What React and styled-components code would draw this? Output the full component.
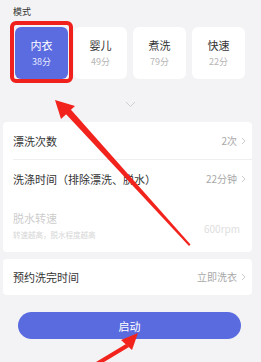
import styled, { createGlobalStyle } from "styled-components";

const GlobalStyle = createGlobalStyle`
  * { box-sizing: border-box; }
  body {
    margin: 0;
    background: #f3f3f5;
    font-family: "Noto Sans CJK SC", "Noto Sans", sans-serif;
  }
`;

const Page = styled.div`
  position: relative;
  width: 261px;
  height: 362px;
  overflow: hidden;
  background: #f3f3f5;
  display: flex;
  flex-direction: column;
`;

const SectionLabel = styled.div`
  padding: 4px 0 0 13px;
  height: 27px;
  font-size: 9px;
  line-height: 16px;
  color: #333;
`;

const ModeRow = styled.div`
  display: flex;
  gap: 6px;
  padding: 0 14px 0 15px;
`;

const ModeCard = styled.div`
  position: relative;
  width: 53px;
  height: 52px;
  border-radius: 6px;
  background: ${(p) => (p.$active ? "#5a6ce0" : "#ffffff")};
  display: flex;
  flex-direction: column;
  align-items: center;
  justify-content: center;
  gap: 2px;

  ${(p) =>
    p.$active &&
    `
    &::after {
      content: "";
      position: absolute;
      inset: -6px -5px -4px -5px;
      border: 4px solid #f0201c;
      border-radius: 6px;
    }
  `}
`;

const ModeName = styled.span`
  font-size: 11px;
  line-height: 15px;
  color: ${(p) => (p.$active ? "#ffffff" : "#333333")};
`;

const ModeTime = styled.span`
  font-size: 9px;
  line-height: 13px;
  color: ${(p) => (p.$active ? "#e6e9ff" : "#b5b5b5")};
`;

const ExpandToggle = styled.div`
  height: 43px;
  display: flex;
  align-items: center;
  justify-content: center;
  padding-top: 8px;
`;

const Panel = styled.div`
  margin: 0 9px 0 3px;
  background: #ffffff;
  border-radius: 4px;
  display: flex;
  flex-direction: column;
`;

const Row = styled.div`
  position: relative;
  display: flex;
  align-items: center;
  justify-content: space-between;
  height: ${(p) => p.$height || 38}px;
  padding: 0 6px 0 10px;

  ${(p) =>
    p.$divider &&
    `
    &::after {
      content: "";
      position: absolute;
      left: 10px;
      right: 0;
      bottom: 0;
      height: 1px;
      background: #efeff1;
    }
  `}
`;

const LabelGroup = styled.div`
  display: flex;
  flex-direction: column;
  gap: 5px;
`;

const RowLabel = styled.span`
  font-size: 11px;
  line-height: 14px;
  color: ${(p) => (p.$disabled ? "#cdcdcd" : "#333333")};
`;

const RowHint = styled.span`
  font-size: 7.5px;
  line-height: 10px;
  color: #d6d6d6;
`;

const RowValue = styled.span`
  display: flex;
  align-items: center;
  gap: 4px;
  font-size: 10px;
  line-height: 14px;
  color: ${(p) => (p.$disabled ? "#dedede" : "#a8a8a8")};
  padding-right: ${(p) => (p.$disabled ? "6px" : "0")};
  margin-top: ${(p) => (p.$disabled ? "8px" : "0")};
`;

const Gap = styled.div`
  height: ${(p) => p.$size}px;
`;

const StartButton = styled.button`
  margin: 0 20px 0 18px;
  height: 27px;
  border: none;
  border-radius: 14px;
  background: #5a6be0;
  color: #ffffff;
  font-family: inherit;
  font-size: 11px;
  padding: 0;
`;

const ArrowLayer = styled.svg`
  position: absolute;
  left: 0;
  top: 0;
  pointer-events: none;
`;

const Chevron = () => (
  <svg width="5" height="8" viewBox="0 0 5 8">
    <path d="M1 1l3 3-3 3" fill="none" stroke="#cfcfcf" strokeWidth="1" />
  </svg>
);

const modes = [
  { name: "内衣", time: "38分", active: true },
  { name: "婴儿", time: "49分" },
  { name: "煮洗", time: "79分" },
  { name: "快速", time: "22分" },
];

export default function App() {
  return (
    <>
      <GlobalStyle />
      <Page>
        <SectionLabel>模式</SectionLabel>
        <ModeRow>
          {modes.map((m) => (
            <ModeCard key={m.name} $active={m.active}>
              <ModeName $active={m.active}>{m.name}</ModeName>
              <ModeTime $active={m.active}>{m.time}</ModeTime>
            </ModeCard>
          ))}
        </ModeRow>
        <ExpandToggle>
          <svg width="11" height="7" viewBox="0 0 11 7">
            <path d="M1 1l4.5 4.5L10 1" fill="none" stroke="#cfcfd3" strokeWidth="1" />
          </svg>
        </ExpandToggle>
        <Panel>
          <Row $divider>
            <RowLabel>漂洗次数</RowLabel>
            <RowValue>
              2次 <Chevron />
            </RowValue>
          </Row>
          <Row>
            <RowLabel>洗涤时间（排除漂洗、脱水）</RowLabel>
            <RowValue>
              22分钟 <Chevron />
            </RowValue>
          </Row>
          <Row $height={54}>
            <LabelGroup>
              <RowLabel $disabled>脱水转速</RowLabel>
              <RowHint>转速越高，脱水程度越高</RowHint>
            </LabelGroup>
            <RowValue $disabled>600rpm</RowValue>
          </Row>
        </Panel>
        <Gap $size={7} />
        <Panel>
          <Row $height={36}>
            <RowLabel>预约洗完时间</RowLabel>
            <RowValue>
              立即洗衣 <Chevron />
            </RowValue>
          </Row>
        </Panel>
        <Gap $size={17} />
        <StartButton>启动</StartButton>

        <ArrowLayer width="261" height="362" viewBox="0 0 261 362">
          <path d="M64 112 L189 246 L190.5 244.6 L69 107.6 Z" fill="#f2231c" />
          <path d="M55 100 L75 106 L61 119 Z" fill="#f2231c" />
          <path d="M126 344 L96 362 L104 362 L129 347 Z" fill="#f2231c" />
          <path d="M138 333 L132 350 L121 340 Z" fill="#f2231c" />
        </ArrowLayer>
      </Page>
    </>
  );
}
